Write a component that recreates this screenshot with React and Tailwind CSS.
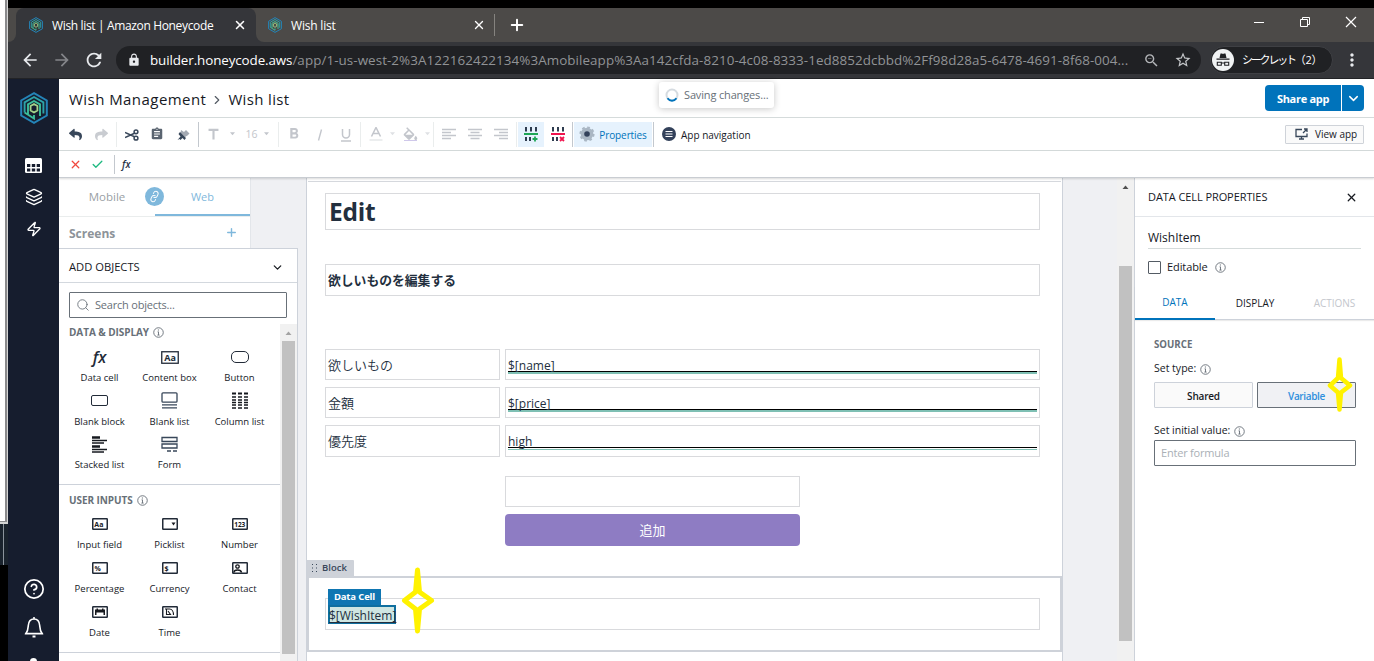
import React from 'react';
import {
    MdArrowBack,
    MdArrowForward,
    MdRefresh,
    MdLock,
    MdZoomOut,
    MdStarBorder,
    MdMoreVert,
    MdAssignment,
    MdTitle,
    MdFormatBold,
    MdFormatColorFill,
} from 'react-icons/md';
import { FaReply, FaShare } from 'react-icons/fa';
import { Layers, Zap, CircleHelp, Plus, X, Check, ChevronDown, ChevronRight, Search, Link } from 'lucide-react';

const Logo = ({ className }) => (
    <svg viewBox="0 0 28 32" className={`shrink-0 ${className}`} fill="none">
        <path d="M14 1.2 26.8 8.5v15L14 30.8 1.2 23.5v-15z" stroke="#2484b8" strokeWidth="2" />
        <path d="M4.6 20.5V10.4L14 5l9.4 5.4v11.2" stroke="#2da3a8" strokeWidth="1.9" />
        <path d="M4.6 20.5L14 26.500v-3.500M8 22v-9.600L14 9l6 3.400V24" stroke="#3bbd9b" strokeWidth="1.9" />
        <path d="M14 12l3.400 2v4.500L14 20.500l-3.400-2V14z" stroke="#a5d48a" strokeWidth="1.8" />
    </svg>
);

const Caret = ({ className }) => (
    <svg viewBox="0 0 6 4" className={className}>
        <path d="M0 0h6L3 3.5z" fill="currentColor" />
    </svg>
);

const Info = ({ className }) => (
    <svg viewBox="0 0 12 12" className={className} fill="none" stroke="#687078" strokeWidth="1">
        <circle cx="6" cy="6" r="5.2" />
        <path d="M6 5.2v3.6M5 5.3h1M4.8 8.8h2.4" />
        <path d="M5.9 2.8v1.1" strokeWidth="1.2" />
    </svg>
);

const Divider = ({ className }) => <div className={`h-[25px] w-px shrink-0 ${className}`} />;

const Cell = ({ className, children }) => (
    <button className={`flex h-[25px] shrink-0 items-center justify-center whitespace-nowrap ${className}`}>{children}</button>
);

const BrowserTabs = () => (
    <div className="flex h-[34px] bg-[#4c4a48] pl-2 text-xs text-white">
        <div className="relative flex w-[240px] items-center rounded-t-lg bg-[#35363a] pl-[13px]">
            <span className="absolute -left-2 bottom-0 size-2 bg-[#35363a]">
                <span className="block size-2 rounded-br-lg bg-[#4c4a48]" />
            </span>
            <span className="absolute -right-2 bottom-0 size-2 bg-[#35363a]">
                <span className="block size-2 rounded-bl-lg bg-[#4c4a48]" />
            </span>
            <Logo className="h-4 w-[14px]" />
            <span className="ml-[9px] w-[181px] shrink-0 whitespace-nowrap pt-[2px] tracking-[-0.35px]">Wish list | Amazon Honeycode</span>
            <X className="size-[14px] shrink-0" strokeWidth={2.6} />
        </div>
        <div className="flex w-[239px] items-center border-r border-[#85837f] [border-image:linear-gradient(#4c4a48_20%,#85837f_20%,#85837f_80%,#4c4a48_80%)_1] pl-3">
            <Logo className="h-4 w-[14px]" />
            <span className="ml-[9px] w-[181px] shrink-0 whitespace-nowrap pt-[2px] tracking-[-0.2px]">Wish list</span>
            <X className="size-[14px] shrink-0" strokeWidth={2.3} />
        </div>
        <div className="flex w-[44px] items-center justify-center">
            <Plus className="size-[18px]" strokeWidth={2.6} />
        </div>
        <div className="ml-auto flex h-[28px] items-center gap-[34px] pr-[17px]">
            <svg viewBox="0 0 12 12" className="size-3" stroke="#fff" fill="none">
                <path d="M1 6.5h10" />
            </svg>
            <svg viewBox="0 0 12 12" className="size-3" stroke="#fff" fill="none">
                <path d="M1.5 3.5h7v7h-7zM3.5 3.5v-2h7v7h-2" />
            </svg>
            <svg viewBox="0 0 12 12" className="size-3" stroke="#fff" fill="none" strokeWidth="1.2">
                <path d="M1 1l10 10M11 1L1 11" />
            </svg>
        </div>
    </div>
);

const AddressBar = () => (
    <div className="flex h-[37px] items-center border-b border-[#222326] bg-[#35363a] pl-3 text-[#e8eaed]">
        <MdArrowBack className="size-5" />
        <MdArrowForward className="ml-3 size-5 text-[#85868a]" />
        <MdRefresh className="ml-[11px] size-[22px]" />
        <div className="ml-[11px] flex h-7 w-[1085px] items-center rounded-full bg-[#202124] pl-[11px]">
            <MdLock className="size-[14px] shrink-0" />
            <span className="ml-[9px] w-[993px] shrink-0 whitespace-nowrap text-[13.400px] tracking-[0.075px] text-[#919396]">
                <span className="tracking-[-0.100px] text-white">builder.honeycode.aws</span>
                /app/1-us-west-2%3A122162422134%3Amobileapp%3Aa142cfda-8210-4c08-8333-1ed8852dcbbd%2Ff98d28a5-6478-4691-8f68-004...
            </span>
            <MdZoomOut className="size-[17px] shrink-0 text-[#b4b6b9]" />
            <MdStarBorder className="ml-[14px] size-[18px] shrink-0 text-[#c4c6c9]" />
        </div>
        <div className="ml-[9px] flex h-7 w-[123px] items-center rounded-full border border-[#3f4044] bg-[#202124] pl-px">
            <svg viewBox="0 0 22 22" className="size-[22px] shrink-0">
                <circle cx="11" cy="11" r="11" fill="#f1f3f4" />
                <path d="M7.5 9l1-4.5h1.5l1 .5 1-.5h1.5l1 4.5zM4.5 9.6h13v1.2h-13z" fill="#202124" />
                <path d="M5.3 13.2h4v3h-4zM12.7 13.2h4v3h-4zM9.3 14h3.4" fill="none" stroke="#202124" strokeWidth="1.1" />
            </svg>
            <span className="ml-2 whitespace-nowrap text-[11px] tracking-[-2.200px] text-white">
                シークレット<span className="tracking-[-0.300px]">（2）</span>
            </span>
        </div>
        <MdMoreVert className="ml-[9px] size-5" />
    </div>
);

const SideNav = () => (
    <nav className="flex w-[51px] shrink-0 flex-col items-center overflow-hidden bg-[#161d2e] pt-[13px] text-white">
        <Logo className="h-8 w-7" />
        <svg viewBox="0 0 17 15" className="mt-[34px] h-[15px] w-[17px] shrink-0">
            <rect width="17" height="15" rx="1.5" fill="#fff" />
            <path d="M2 6h3.3v3H2zM6.8 6h3.4v3H6.8zM11.7 6H15v3h-3.3zM2 10.5h3.3v3H2zM6.8 10.5h3.4v3H6.8zM11.7 10.5H15v3h-3.3z" fill="#161d2e" />
        </svg>
        <Layers className="mt-[15px] size-[18px] shrink-0" strokeWidth={1.7} />
        <Zap className="mt-[15px] size-[16px] shrink-0" strokeWidth={2} />
        <CircleHelp className="mt-[341px] size-[22px] shrink-0" strokeWidth={1.9} />
        <svg viewBox="0 0 20 22" className="mt-4 h-[22px] w-5 shrink-0" fill="none" stroke="#fff" strokeWidth="1.6">
            <path d="M2 17.5c2-2.5 2-4 2.3-8C4.600 5.500 6.800 3 10 3s5.400 2.500 5.700 6.500c.3 4 .3 5.500 2.300 8zM10 3V1M1 17.600h18" />
            <path d="M8.500 20.500h3" strokeWidth="2" />
        </svg>
        <span className="mt-5 size-[7px] shrink-0 rounded-full bg-white" />
    </nav>
);

const Header = () => (
    <header className="relative flex h-[39px] shrink-0 items-center border-b border-[#d5dbdb] bg-white pl-[10px] pr-[10px]">
        <div className="flex items-center pt-[3px] text-[15px] text-[#16191f]">
            <span className="tracking-[0.450px]">Wish Management</span>
            <ChevronRight className="mx-[4px] size-[14px] text-[#545b64]" strokeWidth={2} />
            <span className="tracking-[0.350px]">Wish list</span>
        </div>
        <div className="absolute left-[600px] top-[3px] flex h-[26px] w-[115px] items-center rounded-[3px] bg-white pl-[6px] text-xs text-[#687078] shadow-[0_1px_7px_rgba(0,0,0,0.22)]">
            <svg viewBox="0 0 14 14" className="size-[14px]" fill="none" strokeWidth="2">
                <circle cx="7" cy="7" r="5.500" stroke="#d5dbe0" />
                <path d="M2.500 10.300a5.500 5.500 0 0 0 9 0" stroke="#0073bb" />
            </svg>
            <span className="ml-[5px] whitespace-nowrap text-[11px] tracking-[-0.150px]">Saving changes...</span>
        </div>
        <div className="ml-auto flex h-[26px] gap-px text-white">
            <button className="w-[76px] rounded-l-sm bg-[#0073bb] pt-[2px] text-[11px] font-bold tracking-[-0.300px]">Share app</button>
            <button className="flex w-[22px] items-center justify-center rounded-r-sm bg-[#0073bb]">
                <ChevronDown className="size-[15px]" strokeWidth={2.300} />
            </button>
        </div>
    </header>
);

const RowsIcon = ({ color, children }) => (
    <svg viewBox="0 0 14 16" className="h-4 w-[14px]" fill="none">
        <path d="M2 1v4.500M7 1v4.500M12 1v4.500M2 11v4M6 11v4" stroke="#2f3d50" strokeWidth="2" />
        <path d="M0 8h14" stroke={color} strokeWidth="2" />
        <path d={children} stroke={color} strokeWidth="1.800" />
    </svg>
);

const AlignIcon = ({ d }) => (
    <svg viewBox="0 0 14 12" className="h-3 w-[14px]" stroke="#c3c6cc" strokeWidth="1.300">
        <path d={d} />
    </svg>
);

const Toolbar = () => (
    <div className="flex h-[33px] shrink-0 items-center border-b border-[#d5dbdb] bg-white pl-1 pr-[10px] text-[#38475a]">
        <Cell className="w-[25px]"><FaReply className="size-[13px]" /></Cell>
        <Cell className="w-[26px] text-[#c9ccd1]"><FaShare className="size-[13px]" /></Cell>
        <Divider className="ml-[2px] bg-[#eaeded]" />
        <Cell className="w-[29px] pt-[2px]">
            <svg viewBox="0 0 14 12" className="h-3 w-[14px]" fill="none" stroke="currentColor" strokeWidth="1.500">
                <circle cx="11" cy="2.800" r="1.900" />
                <circle cx="11" cy="9.200" r="1.900" />
                <path d="M0 3.500l9.500 4.300M0 8.500l9.500-4.300" />
            </svg>
        </Cell>
        <Cell className="w-[22px] text-[#5a6470]"><MdAssignment className="size-[14px]" /></Cell>
        <Cell className="w-[30px]">
            <svg viewBox="0 0 14 13" className="h-[13px] w-[14px]">
                <path d="M5 2l3 2 2-2 3.500 3.500-2 2L9 9 4.500 5z" fill="#a3a9b2" />
                <path d="M4 4l6 6-1.500 2-2-2-2 2-1-1-2 1 3-3.500L2.500 6z" fill="#38475a" />
            </svg>
        </Cell>
        <Divider className="bg-[#c3c8ce]" />
        <Cell className="w-[28px] pt-px text-[#c3c6cc]"><MdTitle className="size-[17px]" /></Cell>
        <Cell className="w-[11px] text-[#c3c6cc]"><Caret className="h-1 w-[5px]" /></Cell>
        <Cell className="w-[24px] pl-[3px] pt-[2px] text-[10.500px] text-[#c3c6cc]">16</Cell>
        <Cell className="mr-[7px] w-[9px] text-[#c3c6cc]"><Caret className="h-1 w-[5px]" /></Cell>
        <Divider className="bg-[#eaeded]" />
        <Cell className="w-[29px] text-[#c3c6cc]"><MdFormatBold className="size-[18px]" /></Cell>
        <Cell className="w-[24px] pt-px text-[#c3c6cc]">
            <svg viewBox="0 0 6 12" className="h-3 w-[6px]" stroke="currentColor" strokeWidth="1.400"><path d="M4.500 0.500l-3 11" /></svg>
        </Cell>
        <Cell className="w-[28px] pt-px text-[#c3c6cc]">
            <svg viewBox="0 0 12 14" className="h-[14px] w-3" fill="none" stroke="currentColor" strokeWidth="1.500"><path d="M2.500 1v5.500a3.500 3.500 0 0 0 7 0V1M1 13h10" /></svg>
        </Cell>
        <Divider className="bg-[#eaeded]" />
        <Cell className="w-[29px] text-[#c3c6cc]">
            <svg viewBox="0 0 14 14" className="size-[14px]" fill="none" stroke="currentColor" strokeWidth="1.500">
                <path d="M2.500 9.500L7 0.500l4.500 9M4 6.500h6" />
                <path d="M0.500 13h13" stroke="#e6e8ea" />
            </svg>
        </Cell>
        <Cell className="w-[5px] text-[#dfe1e4]"><Caret className="h-1 w-[5px] shrink-0" /></Cell>
        <Cell className="w-[31px] text-[#c3c6cc]">
            <span className="flex flex-col items-center">
                <MdFormatColorFill className="h-[13px] w-[15px]" viewBox="2 0 20 17" />
                <span className="h-px w-[13px] bg-[#cfc8ea]" />
            </span>
        </Cell>
        <Cell className="w-[3px] text-[#dfe1e4]"><Caret className="h-1 w-[5px] shrink-0" /></Cell>
        <Divider className="ml-1 bg-[#eaeded]" />
        <Cell className="w-[29px]"><AlignIcon d="M0 1.500h14M0 4.500h9M0 7.500h14M0 10.500h9" /></Cell>
        <Cell className="w-[24px]"><AlignIcon d="M0 1.500h14M2.500 4.500h9M0 7.500h14M2.500 10.500h9" /></Cell>
        <Cell className="mr-px w-[28px]"><AlignIcon d="M0 1.500h14M5 4.500h9M0 7.500h14M5 10.500h9" /></Cell>
        <Divider className="bg-[#eaeded]" />
        <Cell className="ml-px w-[26px] bg-[#e6f2fd]"><RowsIcon color="#1ea656">M11 10.500v5M8.500 13h5</RowsIcon></Cell>
        <Cell className="mr-px w-[27px]"><RowsIcon color="#f0144e">M9 11l4 4M13 11l-4 4</RowsIcon></Cell>
        <Divider className="bg-[#c3c8ce]" />
        <Cell className="mx-px w-[78px] bg-[#e6f2fd] text-[10px] tracking-[-0.100px] text-[#0073bb]">
            <svg viewBox="0 0 16 16" className="mr-1 size-4 shrink-0">
                <circle cx="8" cy="8" r="6.300" fill="#aab7c4" />
                <circle cx="8" cy="8" r="6.600" fill="none" stroke="#aab7c4" strokeWidth="2" strokeDasharray="2.700 2.480" />
                <circle cx="8" cy="8" r="2.800" fill="#33415a" />
            </svg>
            <span className="pt-[2px]">Properties</span>
        </Cell>
        <Divider className="bg-[#c3c8ce]" />
        <Cell className="ml-2 text-[10px] text-[#16191f]">
            <svg viewBox="0 0 14 14" className="mr-[5px] size-[14px] shrink-0">
                <circle cx="7" cy="7" r="7" fill="#33415a" />
                <path d="M3.500 4.500h7M3.500 7h7M3.500 9.500h7" stroke="#fff" strokeWidth="1.100" />
            </svg>
            <span className="pt-[2px]">App navigation</span>
        </Cell>
        <button className="ml-auto flex h-[19px] w-[79px] items-center whitespace-nowrap rounded-[1px] border border-[#cfd3d9] bg-[#fafafa] pl-[9px] text-[10px] text-[#16191f]">
            <svg viewBox="0 0 13 12" className="mr-[7px] h-3 w-[13px]" fill="none" stroke="#38475a" strokeWidth="1.300">
                <path d="M7 1.500H1v7h11v-3M6.500 8.500v2.500M4 11h5M8 5l4-4M9 1h3v3" />
            </svg>
            <span className="pt-px">View app</span>
        </button>
    </div>
);

const FormulaBar = () => (
    <div className="relative z-10 flex h-[27px] shrink-0 items-center border-b border-[#c9cdd2] bg-white pl-[10px] shadow-[0_1px_2px_rgba(0,0,0,0.15)]">
        <X className="size-[13px] text-[#f0483e]" strokeWidth={2.400} />
        <Check className="ml-[9px] size-[13px] text-[#1eb980]" strokeWidth={2.400} />
        <div className="ml-[10px] h-[19px] w-px bg-[#c3c8ce]" />
        <span className="ml-[7px] text-[10px] italic font-semibold text-[#2a3547]">fx</span>
    </div>
);

const Frame = ({ children }) => (
    <svg viewBox="0 0 16 12" className="h-3 w-4" fill="none">
        <rect x="0.750" y="0.750" width="14.500" height="10.500" rx="0.500" stroke="#222b38" strokeWidth="1.500" />
        {children}
    </svg>
);

const glyph = (text, x, size) => (
    <text x={x} y="8.600" fontSize={size} fontWeight="700" fill="#16191f">{text}</text>
);

const displayObjects = [
    { name: 'Data cell', icon: <span className="text-[16px] font-semibold italic leading-none text-[#222b38]">fx</span> },
    {
        name: 'Content box',
        icon: (
            <svg viewBox="0 0 18 13" className="h-[13px] w-[18px]" fill="none">
                <rect x="0.750" y="0.750" width="16.500" height="11.500" stroke="#222b38" strokeWidth="1.300" />
                <text x="3.300" y="10" fontSize="9" fontWeight="700" fill="#222b38">Aa</text>
            </svg>
        ),
    },
    {
        name: 'Button',
        icon: <span className="h-3 w-[18px] rounded-[5px] border-[1.500px] border-[#222b38]" />,
    },
    { name: 'Blank block', icon: <span className="h-[11px] w-[17px] rounded-[2px] border-[1.500px] border-[#222b38]" /> },
    {
        name: 'Blank list',
        icon: (
            <svg viewBox="0 0 17 17" className="size-[17px]" fill="none" stroke="#38475a" strokeWidth="1.300">
                <rect x="1" y="0.800" width="15" height="9.400" rx="1" />
                <path d="M1 12.800h15M1 15.800h15" />
            </svg>
        ),
    },
    {
        name: 'Column list',
        icon: (
            <svg viewBox="0 0 16 17" className="h-[17px] w-4" stroke="#16191f" strokeWidth="1.400">
                <path d="M0 1.500h4M6 1.500h4M12 1.500h4" strokeWidth="2.200" />
                <path d="M0 5h4M6 5h4M12 5h4M0 8h4M6 8h4M12 8h4M0 10.500h4M6 10.500h4M12 10.500h4M0 13h4M6 13h4M12 13h4M0 16h4M6 16h4M12 16h4" />
            </svg>
        ),
    },
    {
        name: 'Stacked list',
        icon: (
            <svg viewBox="0 0 16 17" className="h-[17px] w-4" stroke="#16191f" strokeWidth="1.400">
                <path d="M0 1.500h8M0 10.500h8" strokeWidth="2.400" />
                <path d="M0 4.500h15M0 7h12M0 13.500h15M0 16h12" />
            </svg>
        ),
    },
    {
        name: 'Form',
        icon: (
            <svg viewBox="0 0 17 17" className="size-[17px]" fill="none" stroke="#38475a" strokeWidth="1.300">
                <path d="M1 1.500h15v4H1zM1 8h15v4H1zM6 15h4M12 15h4" />
            </svg>
        ),
    },
];

const inputObjects = [
    { name: 'Input field', icon: <Frame>{glyph('Aa', 2.300, 7)}</Frame> },
    { name: 'Picklist', icon: <Frame><path d="M9.500 4.500h4l-2 3z" fill="#16191f" /></Frame> },
    { name: 'Number', icon: <Frame>{glyph('123', 2.200, 6.500)}</Frame> },
    { name: 'Percentage', icon: <Frame>{glyph('%', 2.500, 7)}</Frame> },
    { name: 'Currency', icon: <Frame>{glyph('$', 2.500, 7)}</Frame> },
    {
        name: 'Contact',
        icon: (
            <Frame>
                <circle cx="5.500" cy="4.500" r="1.700" stroke="#16191f" strokeWidth="1.300" />
                <path d="M2 10.500c0-3.500 7-3.500 7.500 0" stroke="#16191f" strokeWidth="1.500" />
            </Frame>
        ),
    },
    {
        name: 'Date',
        icon: (
            <Frame>
                <path d="M3 9V3.500h1.500V2.500H6v1h4v-1h1.500v1H13V9h-1.500V6.500h-7V9z" fill="#16191f" />
            </Frame>
        ),
    },
    {
        name: 'Time',
        icon: (
            <Frame>
                <path d="M3 3h4.500c2.500 0 4 3 4 6M4.500 3v5.500h4L6 5" stroke="#16191f" strokeWidth="1.100" />
            </Frame>
        ),
    },
];

const SectionTitle = ({ children }) => (
    <h3 className="flex h-4 items-center pl-[10px] pt-px text-[10px] font-bold tracking-[-0.070px] text-[#687078]">
        {children}
        <Info className="ml-1 size-[11px]" />
    </h3>
);

const ObjectItem = ({ item }) => (
    <div className="flex flex-col items-center text-[#16191f]">
        <div className="flex h-5 items-center justify-center">{item.icon}</div>
        <div className="whitespace-nowrap text-[9.500px] leading-[21px]">{item.name}</div>
    </div>
);

const LeftPanel = () => (
    <aside className="flex w-[247px] shrink-0 flex-col bg-[#eff0f3]">
        <div className="h-[70px] w-[192px] border-r border-[#e3e6ea] bg-white">
            <div className="relative flex h-[39px] border-b border-[#eaeded] text-[11.500px]">
                <div className="flex w-24 items-center justify-center text-[#9a9fa5]">Mobile</div>
                <div className="flex w-[95px] items-center justify-center border-b-2 border-[#7fb8dc] pt-[2px] text-[11px] text-[#7fb8dc]">Web</div>
                <span className="absolute left-[86px] top-[9px] flex size-[19px] items-center justify-center rounded-full bg-[#7fb8dc] text-white">
                    <Link className="size-[11px] -rotate-[20deg]" strokeWidth={2} />
                </span>
            </div>
            <div className="flex h-[31px] items-center justify-between pl-[10px] pr-3 text-[12px] font-bold text-[#8d9399]">
                <span className="pt-[3px]">Screens</span>
                <Plus className="size-[13px] text-[#7fb8dc]" strokeWidth={2.600} />
            </div>
        </div>
        <div className="flex min-h-0 w-[239px] flex-1 flex-col border-r border-t border-[#cdd2da] bg-white">
            <div className="flex h-[34px] shrink-0 items-center justify-between border-b border-[#d3d8de] pl-[10px] pr-[13px] pt-[3px] text-[11.200px] text-[#16191f]">
                ADD OBJECTS
                <ChevronDown className="size-[13px]" strokeWidth={2.300} />
            </div>
            <div className="mx-[10px] mt-[9px] flex h-[26px] w-[218px] shrink-0 items-center rounded-[1px] border border-[#687078] pl-[6px] text-[11px] tracking-[-0.200px] text-[#687078]">
                <Search className="mr-[5px] size-[14px]" strokeWidth={1.500} />
                Search objects...
            </div>
            <div className="mt-[6px] flex min-h-0 flex-1">
                <div className="w-[221px] overflow-hidden">
                    <section className="h-[161px] border-b border-[#cdd2da]">
                        <SectionTitle>DATA &amp; DISPLAY</SectionTitle>
                        <div className="ml-[5.500px] mt-[7px] grid auto-rows-[43.500px] grid-cols-[70px_70px_70px]">
                            {displayObjects.map((item) => (
                                <ObjectItem key={item.name} item={item} />
                            ))}
                        </div>
                    </section>
                    <section className="h-[168px] border-b border-[#cdd2da] pt-[7px]">
                        <SectionTitle>USER INPUTS</SectionTitle>
                        <div className="ml-[5.500px] mt-[6px] grid auto-rows-[44px] grid-cols-[70px_70px_70px]">
                            {inputObjects.map((item) => (
                                <ObjectItem key={item.name} item={item} />
                            ))}
                        </div>
                    </section>
                </div>
                <div className="flex w-[17px] flex-col items-center bg-[#f1f1f1]">
                    <div className="flex h-[17px] items-center text-[#a3a3a3]">
                        <Caret className="h-1 w-[7px] rotate-180" />
                    </div>
                    <div className="h-[313px] w-[13px] bg-[#c1c1c1]" />
                </div>
            </div>
        </div>
    </aside>
);

const fields = [
    { label: '欲しいもの', value: '$[name]', line: 'h-[2px]', height: 'h-[31px]' },
    { label: '金額', value: '$[price]', line: 'h-[2px]', height: 'h-[31px]' },
    { label: '優先度', value: 'high', line: 'mt-px h-px', height: 'h-8' },
];

const Canvas = () => (
    <main className="flex min-w-0 flex-1 overflow-hidden bg-[#eff0f3]">
        <div className="flex w-[757px] shrink-0 flex-col border-x border-[#cdd2da] bg-white text-[13px] text-[#232f3e]">
            <div className="mx-px h-1 shrink-0 border-b border-[#d5d8dd]" />
            <div className="flex flex-col pl-[18px] pt-[11px]">
                <h1 className="flex h-[37px] w-[715px] items-center border border-[#d9dadd] pl-[3px] pt-[2px] text-[24.500px] font-bold tracking-[-0.200px]">Edit</h1>
                <div className="mt-[34px] flex h-8 w-[715px] items-center border border-[#d9dadd] pl-[2px] pt-px text-[12.800px] font-bold">
                    欲しいものを編集する
                </div>
                <div className="mt-[53px] flex flex-col gap-[7px]">
                    {fields.map((field) => (
                        <div key={field.label} className={`flex gap-[5px] ${field.height}`}>
                            <div className="flex w-[175px] items-center border border-[#d9dadd] pl-[2px] pt-[2px] font-[350]">{field.label}</div>
                            <div className="w-[535px] border border-[#d9dadd] px-[2px] pt-[6px]">
                                <div className="h-[16px] border-b border-black text-[12px] leading-[19px]">{field.value}</div>
                                <div className={`bg-[#7fc0b4] ${field.line}`} />
                            </div>
                        </div>
                    ))}
                </div>
                <div className="ml-[180px] mt-[19px] h-[31px] w-[295px] border border-[#d9dadd]" />
                <button className="ml-[180px] mt-[7px] h-8 w-[295px] rounded-[4px] bg-[#8e7cc3] pt-px text-white">追加</button>
            </div>
            <div className="mt-[14px] flex h-4 w-[47px] items-center rounded-tr-[1px] bg-[#ced2d9] pl-[5px] text-[9.500px] font-semibold text-[#38475a]">
                <svg viewBox="0 0 5 8" className="mr-[5px] h-2 w-[5px]" fill="#38475a">
                    <path d="M0 0h1v1H0zM4 0h1v1H4zM0 3.500h1v1H0zM4 3.500h1v1H4zM0 7h1v1H0zM4 7h1v1H4z" />
                </svg>
                <span className="pt-px">Block</span>
            </div>
            <div className="h-[76px] shrink-0 border-2 border-[#ced2d9] pl-4 pt-5">
                <div className="relative h-8 w-[715px] border border-[#d9dadd] pl-[2px] pt-[6px]">
                    <div className="absolute -top-[10px] left-[2px] flex h-4 w-[53px] items-center justify-center bg-[#0f76b2] pt-px text-[9.500px] font-bold tracking-[-0.150px] text-white">
                        Data Cell
                    </div>
                    <div className="h-[19px] w-[68px] border-2 border-[#0f6f9f] bg-[#cfe6e2]">
                        <span className="-ml-px block whitespace-nowrap text-[12px] leading-[17px] underline underline-offset-2">$[WishItem]</span>
                    </div>
                </div>
            </div>
        </div>
        <div className="ml-auto flex w-[17px] flex-col items-center bg-[#f1f1f1]">
            <div className="flex h-[17px] items-center text-[#4f4f4f]">
                <Caret className="h-1 w-[7px] rotate-180" />
            </div>
            <div className="mt-[71px] h-[375px] w-[13px] bg-[#c1c1c1]" />
        </div>
    </main>
);

const PropertiesPanel = () => (
    <aside className="flex w-[240px] shrink-0 flex-col border-l border-[#cdd2da] bg-white text-[#16191f]">
        <div className="flex h-[39px] items-center justify-between border-b border-[#e3e6ea] pl-[13px] pr-4 text-[11px] tracking-[-0.080px]">
            DATA CELL PROPERTIES
            <X className="size-[13px]" strokeWidth={2.300} />
        </div>
        <div className="ml-[13px] mt-[9px] flex h-[23px] w-[213px] items-center border-b border-[#d5dbdb] pt-px text-[12px]">WishItem</div>
        <div className="ml-[13px] mt-3 flex h-[13px] items-center text-[11px] tracking-[-0.100px]">
            <span className="mr-[6px] size-[13px] rounded-[1px] border border-[#545b64]" />
            Editable
            <Info className="ml-[7px] size-[11px]" />
        </div>
        <div className="mt-[12px] flex h-[34px] border-b border-[#cdd2da] text-[10px] shadow-[0_1px_1px_rgba(0,0,0,0.08)]">
            <div className="-mb-px flex w-20 items-center justify-center border-b-2 border-[#0073bb] text-[#0073bb]">DATA</div>
            <div className="flex w-20 items-center justify-center pt-px">DISPLAY</div>
            <div className="flex w-[79px] items-center justify-center pt-px text-[#c3c6cc]">ACTIONS</div>
        </div>
        <div className="flex flex-col pl-[19px] pt-4 text-[10.500px]">
            <h3 className="h-4 pt-px text-[9.700px] font-bold leading-4 text-[#687078]">SOURCE</h3>
            <div className="mt-[9px] flex h-4 items-center">
                Set type:
                <Info className="ml-1 size-[11px]" />
            </div>
            <div className="mt-[5px] flex h-[26px] gap-1 text-[10px] font-semibold">
                <button className="w-[99px] rounded-[1px] border border-[#cdd2da] bg-[#fafafa] pt-[2px] tracking-[-0.200px]">Shared</button>
                <button className="w-[99px] rounded-[1px] border border-[#687078] bg-[#f0f1f4] pt-[2px] tracking-[-0.350px] text-[#2d8fdd]">Variable</button>
            </div>
            <div className="mt-[15px] flex h-4 items-center">
                Set initial value:
                <Info className="ml-1 size-[11px]" />
            </div>
            <div className="mt-px flex h-[26px] w-[202px] items-center rounded-[1px] border border-[#687078] pl-[6px] text-[11px] tracking-[-0.200px] text-[#aab0b6]">
                Enter formula
            </div>
        </div>
    </aside>
);

// hand-drawn sparkles that sit on top of the page
const Sparkles = () => (
    <>
        <svg viewBox="0 0 34 68" className="absolute left-[401px] top-[567px] z-20 h-[68px] w-[34px]" fill="none" stroke="#fff200" strokeWidth="5" strokeLinejoin="round">
            <path d="M16.500 3L14.500 25 3.500 33.500l11 8.500 2 22 2-22 12-8.500-12-8.500z" />
        </svg>
        <svg viewBox="0 0 26 58" className="absolute left-[1327px] top-[356px] z-20 h-[58px] w-[26px]" fill="none" stroke="#fff200" strokeWidth="4.500" strokeLinejoin="round">
            <path d="M12.500 3.500L11 22 3 29.500l8 7 1.500 17 1.500-17 9-7L14 22z" />
        </svg>
    </>
);

const App = () => (
    <div className="relative flex h-[661px] w-[1374px] overflow-hidden bg-black font-['Open_Sans','Noto_Sans_CJK_JP',sans-serif]">
        {/* windows peeking out behind the browser */}
        <div className="flex w-2 shrink-0 flex-col">
            <div className="h-[524px] border-b-2 border-r border-[#d4d4d4] bg-[#d4d4d4]">
                <div className="h-full border-b border-r-2 border-[#8a8a8c] bg-white" />
            </div>
            <div className="flex h-[41px] bg-[#1a232d] pl-[3px]">
                <div className="w-px bg-[#8b949c]" />
            </div>
        </div>
        <div className="flex min-w-0 flex-1 flex-col pt-2">
            <BrowserTabs />
            <AddressBar />
            <div className="flex min-h-0 flex-1">
                <SideNav />
                <div className="flex min-w-0 flex-1 flex-col">
                    <Header />
                    <Toolbar />
                    <FormulaBar />
                    <div className="flex min-h-0 flex-1">
                        <LeftPanel />
                        <Canvas />
                        <PropertiesPanel />
                    </div>
                </div>
            </div>
        </div>
        <Sparkles />
    </div>
);

export default App;
